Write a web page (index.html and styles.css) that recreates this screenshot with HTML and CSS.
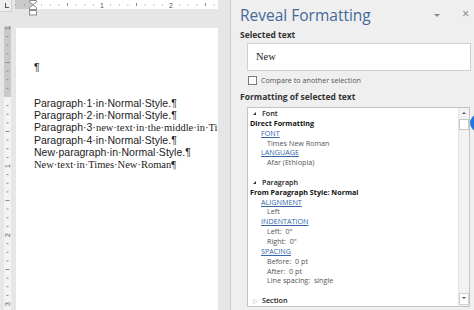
FILE: index.html
```html
<!DOCTYPE html>
<html lang="en">
<head>
    <meta charset="UTF-8">
    <title>Reveal Formatting</title>
    <link rel="stylesheet" href="styles.css">
</head>
<body>

<div class="doc">
    <div class="ruler-row">
        <div class="tab-box"><span class="tab-l"></span></div>
        <svg class="hruler" width="203" height="16" viewBox="0 0 203 16">
            <rect x="0" y="0" width="18" height="9" fill="#c9c9c9"/>
            <rect x="18" y="0" width="185" height="9" fill="#fff"/>
            <path d="M0.75 4.5v1M9.4 4.5v1M26.6 4.5v1M35.25 4.5v1M43.9 4.5v1M61.1 4.5v1M69.75 4.5v1M78.4 4.5v1M95.6 4.5v1M104.25 4.5v1M112.9 4.5v1M130.1 4.5v1M138.75 4.5v1M147.4 4.5v1M164.6 4.5v1M173.25 4.5v1M181.9 4.5v1M199.1 4.5v1" stroke="#8a8a8a" stroke-width="1"/>
            <path d="M52.5 3v3M121.5 3v3M190.5 3v3" stroke="#8a8a8a" stroke-width="1"/>
            <text x="87" y="8" text-anchor="middle" class="rnum">1</text>
            <text x="156" y="8" text-anchor="middle" class="rnum">2</text>
            <!-- indent markers -->
            <path d="M14.5 0.5h7v1.5l-3.5 2.5l-3.5-2.5z" fill="#fff" stroke="#8c8c8c"/>
            <path d="M14.5 9.5v-2l3.5-2.5l3.5 2.5v2z" fill="#fff" stroke="#8c8c8c"/>
            <rect x="14.5" y="10.5" width="7" height="4.5" fill="#fff" stroke="#8c8c8c"/>
        </svg>
    </div>

    <div class="doc-body">
        <svg class="vruler" width="7" height="284" viewBox="0 0 7 284">
            <rect x="0" y="0" width="7" height="71" fill="#c9c9c9"/>
            <rect x="0" y="71" width="7" height="213" fill="#f3f3f3"/>
            <path d="M2.5 10.6h2M2.5 19.25h2M2.5 27.9h2M2.5 45.1h2M2.5 53.75h2M2.5 62.4h2M2.5 79.6h2M2.5 88.25h2M2.5 96.9h2M2.5 114.1h2M2.5 122.75h2M2.5 131.4h2M2.5 148.6h2M2.5 157.25h2M2.5 165.9h2M2.5 183.1h2M2.5 191.75h2M2.5 200.4h2M2.5 217.6h2M2.5 226.25h2M2.5 234.9h2M2.5 252.1h2M2.5 260.75h2M2.5 269.4h2" stroke="#8a8a8a" stroke-width="1"/>
            <path d="M1.5 36.5h4M1.5 105.5h4M1.5 174.5h4M1.5 243.5h4" stroke="#8a8a8a" stroke-width="1"/>
            <text transform="translate(6 2) rotate(-90)" text-anchor="middle" class="rnum">1</text>
            <text transform="translate(6 140) rotate(-90)" text-anchor="middle" class="rnum">1</text>
            <text transform="translate(6 209) rotate(-90)" text-anchor="middle" class="rnum">2</text>
            <text transform="translate(6 278) rotate(-90)" text-anchor="middle" class="rnum">3</text>
        </svg>

        <div class="page">
            <p class="lone-mark">¶</p>
            <p>Paragraph·1·in·Normal·Style.¶</p>
            <p>Paragraph·2·in·Normal·Style.¶</p>
            <p>Paragraph·3·<span class="tnr">new·text·in·the·middle·in·Times·New·Roman·¶</span></p>
            <p>Paragraph·4·in·Normal·Style.¶</p>
            <p>New·paragraph·in·Normal·Style.¶</p>
            <p class="tnr">New·text·in·Times·New·Roman¶</p>
        </div>
    </div>
</div>

<div class="pane">
    <div class="pane-head">
        <h1 class="pane-title">Reveal Formatting</h1>
        <span class="pane-menu"></span>
        <span class="pane-close">×</span>
    </div>

    <div class="pane-label">Selected text</div>
    <div class="sel-box">New</div>
    <div class="compare"><span class="check"></span>Compare to another selection</div>

    <div class="pane-label second">Formatting of selected text</div>
    <div class="tree">
        <div class="tree-list">
            <div class="row group"><span class="twisty open"></span>Font</div>
            <div class="row title">Direct Formatting</div>
            <div class="row link"><a>FONT</a></div>
            <div class="row val">Times New Roman</div>
            <div class="row link"><a>LANGUAGE</a></div>
            <div class="row val">Afar (Ethiopia)</div>
            <div class="row blank"></div>
            <div class="row group"><span class="twisty open"></span>Paragraph</div>
            <div class="row title">From Paragraph Style: Normal</div>
            <div class="row link"><a>ALIGNMENT</a></div>
            <div class="row val">Left</div>
            <div class="row link"><a>INDENTATION</a></div>
            <div class="row val">Left:&nbsp; 0"</div>
            <div class="row val">Right:&nbsp; 0"</div>
            <div class="row link"><a>SPACING</a></div>
            <div class="row val">Before:&nbsp; 0 pt</div>
            <div class="row val">After:&nbsp; 0 pt</div>
            <div class="row val">Line spacing:&nbsp; single</div>
            <div class="row blank"></div>
            <div class="row group"><span class="twisty closed">▷</span>Section</div>
        </div>
        <div class="scroll">
            <span class="scroll-btn up"></span>
            <span class="scroll-thumb"></span>
            <span class="scroll-track"></span>
            <span class="scroll-btn down"></span>
        </div>
    </div>

    <span class="bubble"></span>
</div>

</body>
</html>
```

FILE: styles.css
```css
/* Word window: document on the left, task pane on the right */
body {
    margin: 0; width: 474px; height: 310px; overflow: hidden;
    display: flex; font-family: "Open Sans", sans-serif;
}

/* --- Document side --- */
.doc {
    width: 230px; background: #e6e6e6; border-right: 1px solid #cacaca;
    display: flex; flex-direction: column; flex: none;
}
.ruler-row { height: 26px; display: flex; flex: none; }
.tab-box {
    width: 11px; height: 11px; border-right: 1px solid #d0d0d0; border-bottom: 1px solid #d0d0d0;
    background: #efefef;
}
.tab-l {
    display: block; width: 3px; height: 4px; margin: 3px 0 0 5px;
    border-left: 1px solid #555; border-bottom: 1px solid #555;
}
.hruler { margin-left: 3px; display: block; }
.rnum { font-family: "Liberation Sans", sans-serif; font-size: 7px; fill: #555; }

.doc-body { display: flex; flex: 1; min-height: 0; }
.vruler { margin-left: 4px; display: block; flex: none; }
.page {
    width: 202px; margin: 2px 0 0 5px; background: #fff; flex: none;
    padding: 33px 0 0 18px; box-sizing: border-box; overflow: hidden;
    font-family: "Liberation Sans", Arial, sans-serif; font-size: 10.5px;
    line-height: 12.1px; color: #222; white-space: nowrap;
}
.page p { margin: 0; }
.page .lone-mark { margin-bottom: 24px; }
.tnr { font-family: "Liberation Serif", "Times New Roman", serif; }

/* --- Reveal Formatting pane --- */
.pane {
    flex: 1; background: #efefef; padding-left: 9px; position: relative;
    display: flex; flex-direction: column; min-width: 0;
}
.pane-head { height: 28px; display: flex; padding-top: 5px; box-sizing: border-box; flex: none; }
.pane-title {
    margin: 0; font-size: 15.5px; font-weight: normal; line-height: 20px;
    color: #45689c; flex: 1;
}
.pane-menu {
    width: 0; height: 0; margin: 9px 22px 0 0;
    border-left: 3px solid transparent; border-right: 3px solid transparent;
    border-top: 3px solid #888;
}
.pane-close { font-size: 12px; line-height: 18px; color: #777; margin-right: 5px; }

.pane-label { font-size: 8.5px; font-weight: bold; line-height: 14px; color: #333; flex: none; }
.pane-label.second { margin-top: 1px; }
.sel-box {
    height: 28px; margin: 1px 3px 0 7px; box-sizing: border-box; flex: none;
    background: #fff; border: 1px solid #cfcfcf; padding-left: 8px;
    font-family: "Liberation Serif", serif; font-size: 10.5px; line-height: 26px; color: #222;
}
.compare {
    height: 18px; display: flex; align-items: center; flex: none;
    font-size: 7.2px; color: #555;
}
.check {
    width: 9px; height: 9px; box-sizing: border-box; margin: 0 4px 0 8px;
    border: 1px solid #7a7a7a; background: #fdfdfd;
}

.tree {
    height: 200px; width: 223px; margin: 3px 0 0 7px; box-sizing: border-box; flex: none;
    border: 1px solid #c4c4c4; background: #fff; display: flex;
}
.tree-list { flex: 1; padding-top: 1px; font-size: 7.2px; line-height: 9.85px; }
.row { height: 9.85px; white-space: nowrap; color: #555; }
.row.group { padding-left: 5px; font-weight: 600; color: #222; display: flex; align-items: center; }
.row.title { padding-left: 2px; font-weight: bold; color: #111; }
.row.link { padding-left: 13px; }
.row.link a { color: #3466a8; text-decoration: underline; }
.row.val { padding-left: 19px; }
.twisty { width: 9px; flex: none; }
.twisty.open::before {
    content: ""; display: block; width: 0; height: 0;
    border-right: 3px solid #333; border-top: 3px solid transparent;
}
.twisty.closed { font-family: "DejaVu Sans", sans-serif; font-size: 6px; color: #aaa; font-weight: normal; }

.scroll {
    width: 11px; flex: none; display: flex; flex-direction: column;
    background: #f2f2f2; border-left: 1px solid #e4e4e4; box-sizing: border-box;
}
.scroll-btn { height: 10px; position: relative; flex: none; }
.scroll-btn::before {
    content: ""; position: absolute; left: 3px; top: 4px; width: 0; height: 0;
    border-left: 2px solid transparent; border-right: 2px solid transparent;
}
.scroll-btn.up::before { border-bottom: 2px solid #555; }
.scroll-btn.down { margin-bottom: 1px; border: 1px solid #d2d2d2; background: #fff; }
.scroll-btn.down::before { border-top: 2px solid #555; left: 2px; top: 3px; }
.scroll-thumb {
    height: 11px; margin-top: 1px; flex: none;
    background: #fff; border: 1px solid #c8c8c8; box-sizing: border-box;
}
.scroll-track { flex: 1; }

.bubble {
    position: absolute; left: 239px; top: 114px; width: 18px; height: 18px;
    border-radius: 50%; background: #1f79e0;
}
```
